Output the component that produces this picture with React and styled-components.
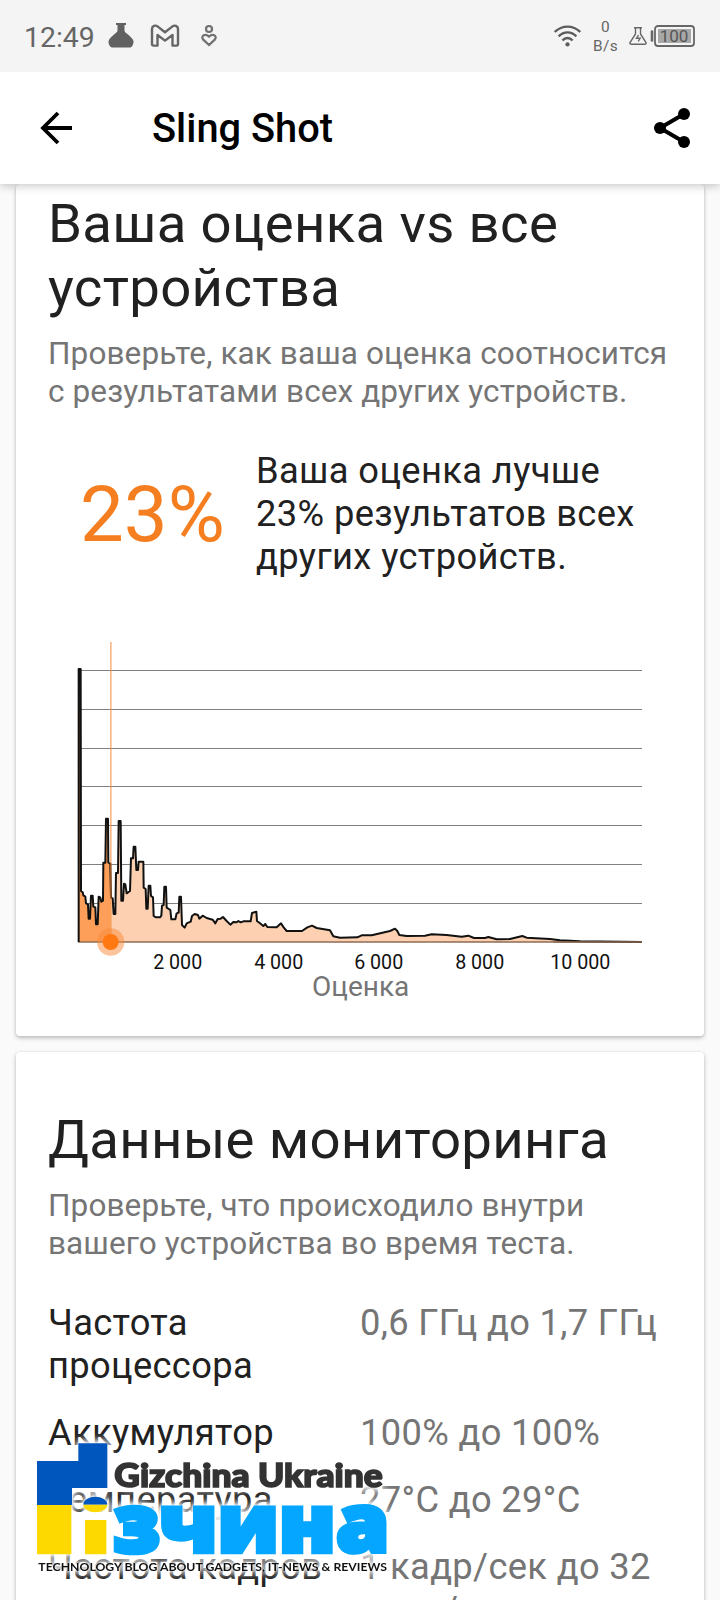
import React from "react";
import styled, { createGlobalStyle } from "styled-components";

const GlobalStyle = createGlobalStyle`
	* {
		box-sizing: border-box;
	}
	body {
		margin: 0;
		background: #fafafa;
		font-family: Roboto, "Noto Sans", sans-serif;
		color: #212121;
	}
	h2, p, dl, dt, dd, h1 {
		margin: 0;
		font-weight: 400;
	}
	svg {
		display: block;
		flex: none;
	}
`;

const Screen = styled.div`
	position: relative;
	width: 720px;
	height: 1600px;
	overflow: hidden;
	display: flex;
	flex-direction: column;
`;

const StatusBar = styled.div`
	height: 72px;
	flex: none;
	z-index: 2;
	padding: 0 25px 0 24px;
	background: #f4f4f4;
	color: #666;
	display: flex;
	align-items: center;
	justify-content: space-between;
`;

const StatusGroup = styled.div`
	display: flex;
	align-items: center;
	height: 72px;
`;

const Notifications = styled.div`
	display: grid;
	grid-template-columns: 42px 50px 18px;
	align-items: center;
`;

const Time = styled.span`
	width: 84px;
	font-size: 28.4px;
	line-height: 32px;
	padding-top: 3px;
`;

const Speed = styled.span`
	width: 48px;
	padding: 1px 0 0 1px;
	font-size: 15.4px;
	line-height: 19px;
	letter-spacing: 0.4px;
	text-align: center;
`;

const Header = styled.header`
	height: 112px;
	flex: none;
	z-index: 1;
	padding: 0 28px 0 40px;
	background: #fff;
	box-shadow: 0 2px 9px rgba(0, 0, 0, 0.22);
	display: flex;
	align-items: center;
`;

const Title = styled.h1`
	flex: 1;
	padding: 2px 0 0 78px;
	font-size: 39.8px;
	line-height: 48px;
	font-weight: 500;
	color: #000;
`;

const Content = styled.main`
	padding: 0 16px;
	display: flex;
	flex-direction: column;
	gap: 16px;
`;

const Card = styled.section`
	flex: none;
	height: ${props => props.height}px;
	padding: ${props => props.top}px 32px 0;
	background: #fff;
	border-radius: 4px;
	box-shadow: 0 2px 4px rgba(0, 0, 0, 0.25), 0 0 2px rgba(0, 0, 0, 0.08);
`;

const Heading = styled.h2`
	font-size: 54.5px;
	line-height: 64px;
	letter-spacing: 0.35px;
	white-space: nowrap;
`;

const Subtitle = styled.p`
	padding-top: 16px;
	font-size: 31.5px;
	line-height: 38px;
	letter-spacing: 0.11px;
	color: #757575;
	white-space: nowrap;
`;

const Summary = styled.div`
	display: flex;
	align-items: center;
	height: 129px;
	margin-top: 39px;
`;

const Percent = styled.div`
	width: 208px;
	padding-left: 32px;
	font-size: 78px;
	color: #f57f20;
`;

const SummaryText = styled.p`
	padding-bottom: 2px;
	font-size: 36.3px;
	line-height: 43px;
	letter-spacing: 0.38px;
	white-space: nowrap;
`;

const ChartBox = styled.div`
	margin: 51px 0 0 12px;
`;

const Rows = styled.dl`
	display: flex;
	flex-direction: column;
	gap: 24px;
	padding-top: 38px;
`;

const Row = styled.div`
	display: grid;
	grid-template-columns: 312px 1fr;
	font-size: 36.3px;
	line-height: 43px;
	letter-spacing: 0.34px;
	dd {
		color: #757575;
		white-space: nowrap;
	}
`;

/* site logo laid over the page */
const Watermark = styled.div`
	position: absolute;
	left: 30px;
	top: 1436px;
	z-index: 2;
	filter: drop-shadow(0 0 1px #fff) drop-shadow(0 0 3px #fff) drop-shadow(0 0 4px #fff);
`;

// x,y pairs of the score curve, three units per pixel
const left = `56,117 62,117 63,783 68,787 70,796 76,800 78,820 84,823 86,866 90,866 93,797 98,797
100,830 106,832 108,883 113,883 116,800 121,803 124,815 129,812 130,698 136,698 138,566 144,566 145,698 151,700`;
const right = `153,803 158,805 161,852 166,852 168,729 174,729 176,573 182,573 184,812 189,812 192,761
196,763 200,790 210,783 213,685 219,685 221,650 226,650 229,720 234,720 236,695 250,695 251,773 257,777
259,836 263,836 266,767 271,767 273,798 279,802 281,858 288,862 300,862 304,857 306,827 311,825 313,770
318,770 320,833 331,840 334,868 346,868 350,850 356,848 358,800 363,800 366,885 374,893 380,880 392,875
396,858 404,852 414,855 418,866 428,857 440,864 458,869 466,880 473,867 482,866 489,861 500,873 511,884
520,876 530,877 535,873 542,877 550,874 572,874 576,849 589,845 591,873 600,880 610,888 616,882 622,891
650,892 663,880 671,892 680,903 726,903 742,892 756,887 770,894 810,901 820,919 840,923 892,922 905,916
935,916 990,903 1005,896 1012,903 1018,915 1040,918 1095,917 1115,913 1160,915 1205,920 1225,917
1242,924 1275,924 1285,921 1310,928 1350,927 1387,918 1400,923 1470,927 1500,931 1560,934 1745,936`;

const grid = [121.5, 238.5, 355.5, 469.5, 586.5, 703.5, 820.5];
const ticks = [
	{ x: 353, label: "2 000" },
	{ x: 656, label: "4 000" },
	{ x: 956, label: "6 000" },
	{ x: 1259, label: "8 000" },
	{ x: 1561, label: "10 000" }
];

const Chart = () => (
	<svg width="600" height="375" viewBox="0 0 1800 1125">
		{grid.map(y => (
			<line key={y} x1="56" x2="1746" y1={y} y2={y} stroke="#808080" strokeWidth="3" />
		))}
		<polygon points={`56,936 ${left} 152,803 152,936`} fill="#fd9f58" />
		<polygon points={`152,936 ${right}`} fill="#fcd0b0" />
		<line x1="54" x2="1746" y1="936" y2="936" stroke="#8d6b54" strokeWidth="5" />
		<polyline
			points={`56,936 ${left} ${right}`}
			fill="none"
			stroke="#111"
			strokeWidth="6"
			strokeLinejoin="round"
		/>
		<line x1="152.500" x2="152.500" y1="36" y2="936" stroke="#f58634" strokeOpacity="0.58" strokeWidth="5" />
		<line x1="1480" x2="1746" y1="936" y2="936" stroke="#8d6b54" strokeWidth="5" />
		<circle cx="152" cy="936" r="41" fill="#f98a3a" fillOpacity="0.5" />
		<circle cx="152" cy="936" r="24" fill="#ff7811" />
		<g fontSize="59" fill="#111" textAnchor="middle">
			{ticks.map(tick => (
				<text key={tick.label} x={tick.x} y="1018">
					{tick.label}
				</text>
			))}
		</g>
		<text x="902" y="1098" fontSize="84" fill="#757575" textAnchor="middle">
			Оценка
		</text>
	</svg>
);

const FlaskIcon = () => (
	<svg width="26" height="26" viewBox="0 0 26 26" fill="#616161">
		<path d="M8 0h10v2h-1.500v6c0 1.500 8 6 9 10 .5 2-1.500 6.500-3 6.500H4c-1.500 0-3.500-3-3.500-5.500C.5 14.500 9.500 9.500 9.500 8V2H8z" />
	</svg>
);

const MailIcon = () => (
	<svg width="30" height="24" viewBox="0 0 30 24" fill="none" stroke="#666" strokeWidth="2.400" strokeLinejoin="round">
		<path d="M2 5c0-3 3.500-4.200 5.500-2.600l7.500 5.800 7.500-5.800C24.500 .8 28 2 28 5v15c0 1-.6 1.600-1.600 1.600H22.500V11L15 16.600 7.500 11v10.600H3.600C2.600 21.600 2 21 2 20z" />
	</svg>
);

const HeartIcon = () => (
	<svg width="18" height="24" viewBox="0 0 18 24" fill="none" stroke="#707070" strokeWidth="2.200">
		<circle cx="9" cy="5" r="3" />
		<path d="M9 21 3 15.400c-2.400-3 1.800-6.800 6-2.800 4.200-4 8.400-.2 6 2.800z" />
	</svg>
);

const WifiIcon = () => (
	<svg width="27" height="24" viewBox="0 0 28 24" fill="none" stroke="#5c5c5c" strokeWidth="2.500">
		<path d="M.8 7.800C8.500 .4 19.500 .4 27.200 7.800M4.800 12.300c5.400-5.400 13-5.400 18.400 0M8.800 16.600c3-3.400 7.400-3.400 10.400 0" />
		<circle cx="14" cy="20.800" r="2.200" fill="#5c5c5c" stroke="none" />
	</svg>
);

const ChargeIcon = () => (
	<svg width="21" height="20" viewBox="0 0 21 20" fill="none" stroke="#666" strokeWidth="1.400">
		<path d="M5 1.800h8M6.500 2v6L1 16.500c-.4 1 0 1.700 1 1.700h14c1 0 1.400-.7 1-1.700L11.500 8V2" />
		<path d="M9.500 9 7.500 12.300h3.600L9.200 15.500" />
	</svg>
);

const BatteryIcon = () => (
	<svg width="45" height="22" viewBox="0 0 45 22">
		<path d="M2 6.500v9" stroke="#666" strokeWidth="2.600" strokeLinecap="round" />
		<rect x="5" y="1" width="39" height="20" rx="3" fill="none" stroke="#666" strokeWidth="1.800" />
		<rect x="8" y="4" width="33" height="14" fill="#a8a8a8" />
		<text x="24" y="17.300" fontSize="17" fill="#555" textAnchor="middle">
			100
		</text>
	</svg>
);

const BackIcon = () => (
	<svg width="34" height="34" viewBox="0 0 34 34" fill="none" stroke="#000" strokeWidth="3.800">
		<path d="M32 17H3M18 2 3 17l15 15" />
	</svg>
);

const ShareIcon = () => (
	<svg width="38" height="42" viewBox="0 0 38 42">
		<path d="M30 7 6 21l24 14" fill="none" stroke="#000" strokeWidth="4" />
		<circle cx="30" cy="7" r="6" />
		<circle cx="6" cy="21" r="6" />
		<circle cx="30" cy="35" r="6" />
	</svg>
);

const Logo = () => (
	<svg width="370" height="150" viewBox="90 48 1110 450">
		<path d="M235 70h87v134H216v51H111V123h124z" fill="#0156be" />
		<path d="M111 255h103v148H111zM255 300h64v103h-64z" fill="#fdd900" />
		<path d="M250 254a36 24 0 0 1 72 0z" fill="#0156be" />
		<path d="M250 254a36 23 0 0 0 72 0z" fill="#fdd900" />
		<text x="343" y="201" fontFamily="Lato" fontWeight="900" fontSize="99" fill="#333" stroke="#333" strokeWidth="5" textLength="805" lengthAdjust="spacingAndGlyphs">
			Gizchina Ukraine
		</text>
		<text x="340" y="396" fontFamily="Open Sans" fontWeight="800" fontSize="238" fill="#04a6ff" stroke="#04a6ff" strokeWidth="14" textLength="828" lengthAdjust="spacingAndGlyphs">
			зчина
		</text>
		<text x="115" y="452" fontFamily="Lato" fontWeight="700" fontSize="35" fill="#111" textLength="1046" lengthAdjust="spacingAndGlyphs">
			TECHNOLOGY BLOG ABOUT GADGETS, IT-NEWS &amp; REVIEWS
		</text>
	</svg>
);

const stats = [
	{ name: ["Частота", "процессора"], value: ["0,6 ГГц до 1,7 ГГц"] },
	{ name: ["Аккумулятор"], value: ["100% до 100%"] },
	{ name: ["Температура"], value: ["27°C до 29°C"] },
	{ name: ["Частота кадров"], value: ["1 кадр/сек до 32", "кадр/сек"] }
];

const Lines = ({ items }) =>
	items.map((item, i) => (
		<React.Fragment key={item}>
			{i > 0 && <br />}
			{item}
		</React.Fragment>
	));

export default function App() {
	return (
		<Screen>
			<GlobalStyle />
			<StatusBar>
				<StatusGroup>
					<Time>12:49</Time>
					<Notifications>
						<FlaskIcon />
						<MailIcon />
						<HeartIcon />
					</Notifications>
				</StatusGroup>
				<StatusGroup>
					<WifiIcon />
					<Speed>
						0<br />
						B/s
					</Speed>
					<ChargeIcon />
					<BatteryIcon />
				</StatusGroup>
			</StatusBar>
			<Header>
				<BackIcon />
				<Title>Sling Shot</Title>
				<ShareIcon />
			</Header>
			<Content>
				<Card height={852} top={7}>
					<Heading>
						<Lines items={["Ваша оценка vs все", "устройства"]} />
					</Heading>
					<Subtitle>
						<Lines items={["Проверьте, как ваша оценка соотносится", "с результатами всех других устройств."]} />
					</Subtitle>
					<Summary>
						<Percent>23%</Percent>
						<SummaryText>
							<Lines items={["Ваша оценка лучше", "23% результатов всех", "других устройств."]} />
						</SummaryText>
					</Summary>
					<ChartBox>
						<Chart />
					</ChartBox>
				</Card>
				<Card height={640} top={55}>
					<Heading>Данные мониторинга</Heading>
					<Subtitle>
						<Lines items={["Проверьте, что происходило внутри", "вашего устройства во время теста."]} />
					</Subtitle>
					<Rows>
						{stats.map(stat => (
							<Row key={stat.name[0] + stat.value[0]}>
								<dt>
									<Lines items={stat.name} />
								</dt>
								<dd>
									<Lines items={stat.value} />
								</dd>
							</Row>
						))}
					</Rows>
				</Card>
			</Content>
			<Watermark>
				<Logo />
			</Watermark>
		</Screen>
	);
}
